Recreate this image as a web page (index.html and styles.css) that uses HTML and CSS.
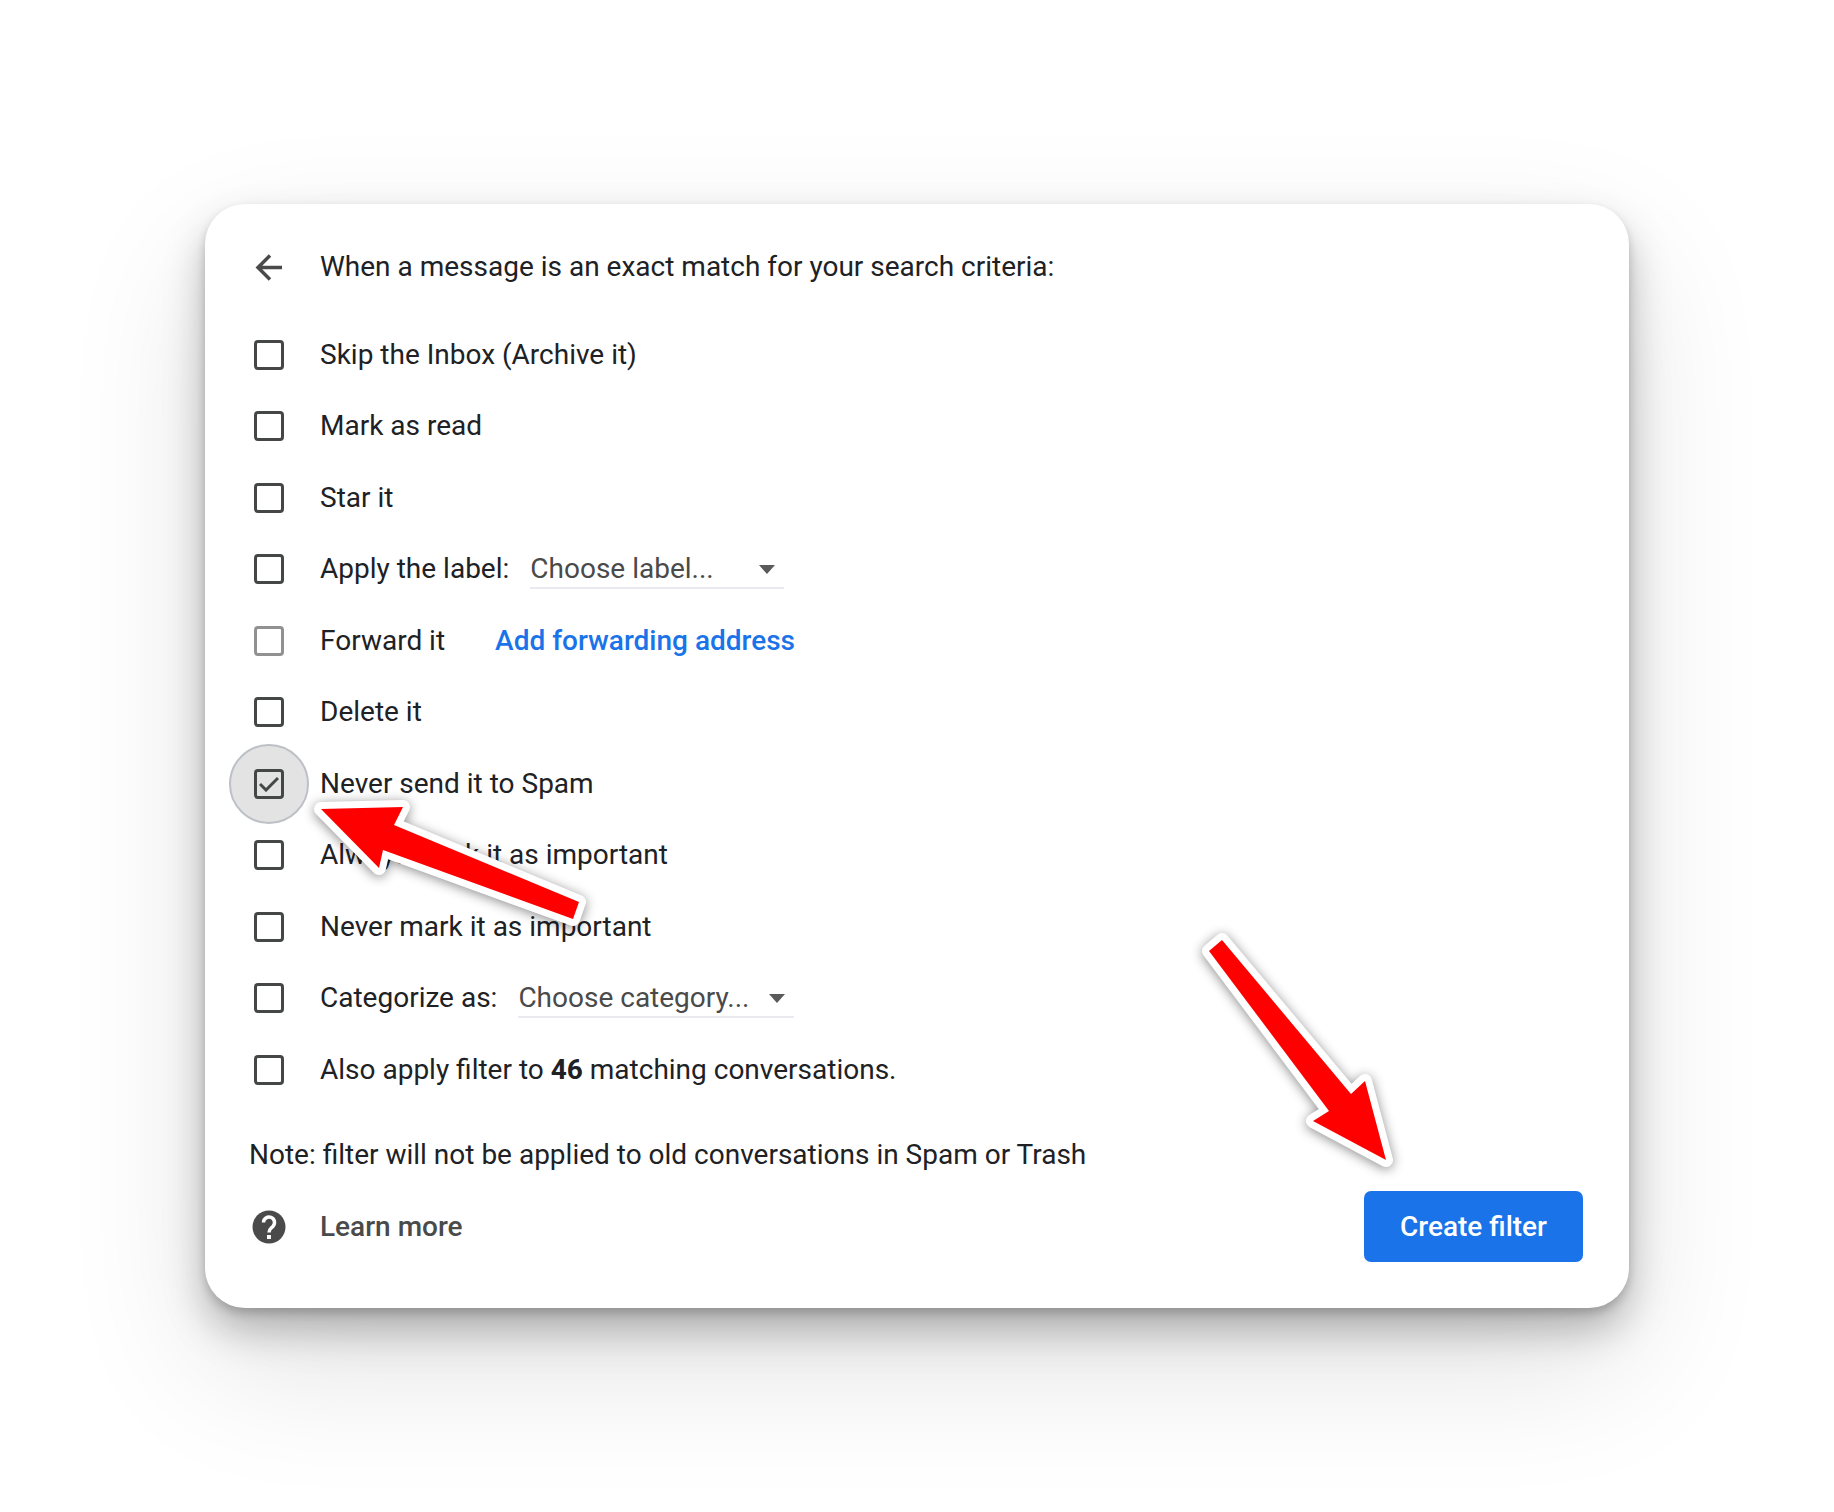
FILE: index.html
```html
<!DOCTYPE html>
<html lang="en">
<head>
  <meta charset="UTF-8">
  <meta name="viewport" content="width=device-width, initial-scale=1.0">
  <title>Create filter</title>
  <link rel="stylesheet" href="styles.css">
</head>
<body>

  <form class="card">
    <header class="row card-header">
      <button type="button" class="slot back" aria-label="Back">
        <svg width="28" height="28" viewBox="0 0 28 28" fill="none" stroke="#4a4a4a" stroke-width="3.5">
          <path d="M27 14.5H3M15 2.5 3 14.5l12 12"/>
        </svg>
      </button>
      <h1>When a message is an exact match for your search criteria:</h1>
    </header>

    <ul class="actions">
      <li class="row">
        <span class="slot"><input type="checkbox" id="archive"></span>
        <label for="archive">Skip the Inbox (Archive it)</label>
      </li>
      <li class="row">
        <span class="slot"><input type="checkbox" id="read"></span>
        <label for="read">Mark as read</label>
      </li>
      <li class="row">
        <span class="slot"><input type="checkbox" id="star"></span>
        <label for="star">Star it</label>
      </li>
      <li class="row">
        <span class="slot"><input type="checkbox" id="label"></span>
        <label for="label">Apply the label:</label>
        <span class="picker picker-label">
          <select aria-label="Label">
            <option>Choose label...</option>
          </select>
        </span>
      </li>
      <li class="row">
        <span class="slot"><input type="checkbox" id="forward" disabled></span>
        <label for="forward">Forward it</label>
        <a class="forward-link" href="#">Add forwarding address</a>
      </li>
      <li class="row">
        <span class="slot"><input type="checkbox" id="delete"></span>
        <label for="delete">Delete it</label>
      </li>
      <li class="row">
        <span class="slot slot-focus">
          <input type="checkbox" id="spam" checked>
          <svg class="tick" width="20" height="16" viewBox="0 0 20 16" fill="none" stroke="#444746" stroke-width="3">
            <path d="M1 8l6 6L19 2"/>
          </svg>
        </span>
        <label for="spam">Never send it to Spam</label>
      </li>
      <li class="row">
        <span class="slot"><input type="checkbox" id="important"></span>
        <label for="important">Always mark it as important</label>
      </li>
      <li class="row">
        <span class="slot"><input type="checkbox" id="unimportant"></span>
        <label for="unimportant">Never mark it as important</label>
      </li>
      <li class="row">
        <span class="slot"><input type="checkbox" id="category"></span>
        <label for="category">Categorize as:</label>
        <span class="picker picker-category">
          <select aria-label="Category">
            <option>Choose category...</option>
          </select>
        </span>
      </li>
      <li class="row">
        <span class="slot"><input type="checkbox" id="existing"></span>
        <label for="existing">Also apply filter to <b>46</b> matching conversations.</label>
      </li>
    </ul>

    <p class="note">Note: filter will not be applied to old conversations in Spam or Trash</p>

    <footer class="card-footer">
      <a class="row learn-more" href="#">
        <span class="slot">
          <svg width="34" height="34" viewBox="0 0 34 34">
            <circle cx="17" cy="17" r="16.5" fill="#4a4a4a"/>
            <path d="M11.5 12.5a5.5 5.5 0 1 1 9.4 3.9c-2 2-3.900 2.900-3.900 6" fill="none" stroke="#fff" stroke-width="3.5"/>
            <rect x="15" y="25" width="4" height="4" fill="#fff"/>
          </svg>
        </span>
        <span>Learn more</span>
      </a>
      <button type="submit" class="create">Create filter</button>
    </footer>

    <!-- callout arrows -->
    <svg class="arrow arrow-spam" width="290" height="145" viewBox="0 0 290 145">
      <path d="M16 19 98 17 89 35 274 112 268 129 78 60 74 78Z"/>
    </svg>
    <svg class="arrow arrow-create" width="210" height="250" viewBox="0 0 210 250">
      <path d="M27 15 156 169 170 156 191 235 118 196 134 186 14 26Z"/>
    </svg>
  </form>

</body>
</html>
```

FILE: styles.css
```css
* {
  box-sizing: border-box;
}

body {
  margin: 0;
  padding: 204px 205px;
  background: #fff;
  color: #202124;
  font-family: Roboto, Arial, sans-serif;
  font-size: 28px;
  line-height: 40px;
}

.card {
  position: relative;
  padding: 35px 46px 46px 44px;
  border-radius: 40px;
  background: #fff;
  box-shadow:
    0 5px 10px rgba(0, 0, 0, 0.18),
    0 22px 40px rgba(0, 0, 0, 0.26),
    0 56px 140px rgba(0, 0, 0, 0.12);
}

.row {
  display: flex;
  align-items: center;
}

.slot {
  position: relative;
  display: flex;
  flex: none;
  align-items: center;
  justify-content: center;
  width: 40px;
  height: 40px;
  margin-right: 31px;
}

.back {
  padding: 0;
  border: 0;
  background: none;
}

.card-header {
  height: 56px;
  margin-bottom: 24px;
}

h1 {
  margin: 0;
  font-size: 28px;
  font-weight: 400;
}

.actions {
  margin: 0;
  padding: 0;
  list-style: none;
}

.actions li {
  height: 71px;
}

.actions li:nth-child(even) {
  height: 72px;
}

input[type="checkbox"] {
  position: relative;
  appearance: none;
  width: 30px;
  height: 30px;
  margin: 0;
  border: 3px solid #444746;
  border-radius: 4px;
}

input[type="checkbox"]:disabled {
  border-color: #919191;
}

/* focus halo behind the ticked box */
.slot-focus::before {
  content: "";
  position: absolute;
  inset: -20px;
  border: 2px solid #bdc1c6;
  border-radius: 50%;
  background: #e3e3e3;
}

.tick {
  position: absolute;
}

.picker {
  position: relative;
  height: 40px;
  margin-left: 21px;
  border-bottom: 2px solid #e8eaed;
}

.picker::after {
  content: "";
  position: absolute;
  top: 16px;
  right: 9px;
  border: 8px solid transparent;
  border-top: 9px solid #5a5a5a;
  border-bottom: 0;
  pointer-events: none;
}

.picker select {
  appearance: none;
  width: 100%;
  height: 38px;
  padding: 0;
  border: 0;
  background: none;
  color: #4a4a4a;
  font: inherit;
}

.picker-label {
  width: 254px;
}

.picker-category {
  width: 276px;
}

.forward-link {
  margin-left: 50px;
  color: #1a73e8;
  font-weight: 500;
  text-decoration: none;
}

.note {
  margin: 26px 0 12px;
  line-height: 48px;
}

.card-footer {
  display: flex;
  align-items: center;
  justify-content: space-between;
}

.learn-more {
  color: #4a4a4a;
  font-weight: 500;
  text-decoration: none;
}

.create {
  height: 71px;
  padding: 0 36px;
  border: 0;
  border-radius: 7px;
  background: #1a73e8;
  color: #fff;
  font: inherit;
  font-weight: 500;
}

.arrow {
  position: absolute;
  overflow: visible;
  fill: #f00;
  stroke: #fff;
  stroke-width: 14px;
  stroke-linejoin: round;
  paint-order: stroke;
  filter: drop-shadow(0 2px 6px rgba(0, 0, 0, 0.45));
  pointer-events: none;
}

.arrow-spam {
  top: 586px;
  left: 100px;
}

.arrow-create {
  right: 224px;
  bottom: 133px;
}
```
